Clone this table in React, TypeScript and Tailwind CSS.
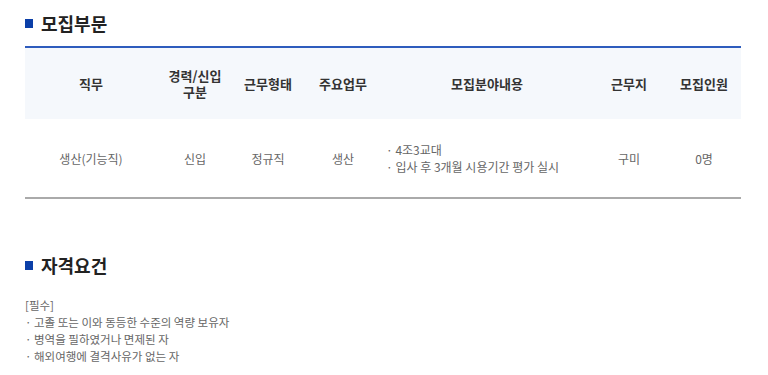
export default function App() {
  const font = { fontFamily: '"Noto Sans CJK KR", "Noto Sans", sans-serif' };
  const heads = ["직무", "경력/신입\n구분", "근무형태", "주요업무", "모집분야내용", "근무지", "모집인원"];
  const widths = ["w-[132px]", "w-[76px]", "w-[70px]", "w-[80px]", "w-[208px]", "w-[76px]", "w-[74px]"];
  return (
    <div className="bg-white w-[768px] h-[375px] overflow-hidden pl-[25px] pr-[27px] pt-[10px]" style={font}>
      <div className="flex items-center gap-[8px] h-[26px]">
        <span className="w-[8px] h-[9px] bg-[#0b3fa8]" />
        <span className="text-[18px] font-bold text-[#222] leading-none">모집부문</span>
      </div>
      <div className="mt-[10px] border-t-2 border-[#2e5cbd] border-b-2 border-b-[#aaaaaa]">
        <div className="flex bg-[#f5f8fc] h-[71px] items-center">
          {heads.map((h, i) => (
            <div key={i} className={`${widths[i]} text-center text-[13px] font-bold text-[#333] leading-[16px] whitespace-pre-line`}>
              {h}
            </div>
          ))}
        </div>
        <div className="flex h-[78px] items-center text-[12px] text-[#666] leading-[17px]">
          <div className={`${widths[0]} text-center`}>생산(기능직)</div>
          <div className={`${widths[1]} text-center`}>신입</div>
          <div className={`${widths[2]} text-center`}>정규직</div>
          <div className={`${widths[3]} text-center`}>생산</div>
          <div className={`${widths[4]} pl-[3px]`}>
            <div>· 4조3교대</div>
            <div>· 입사 후 3개월 시용기간 평가 실시</div>
          </div>
          <div className={`${widths[5]} text-center`}>구미</div>
          <div className={`${widths[6]} text-center`}>0명</div>
        </div>
      </div>
      <div className="flex items-center gap-[8px] h-[26px] mt-[53px]">
        <span className="w-[8px] h-[9px] bg-[#0b3fa8]" />
        <span className="text-[18px] font-bold text-[#222] leading-none">자격요건</span>
      </div>
      <div className="mt-[19px] text-[11.5px] text-[#666] leading-[17px]">
        <div>[필수]</div>
        <div>· 고졸 또는 이와 동등한 수준의 역량 보유자</div>
        <div>· 병역을 필하였거나 면제된 자</div>
        <div>· 해외여행에 결격사유가 없는 자</div>
      </div>
    </div>
  );
}
